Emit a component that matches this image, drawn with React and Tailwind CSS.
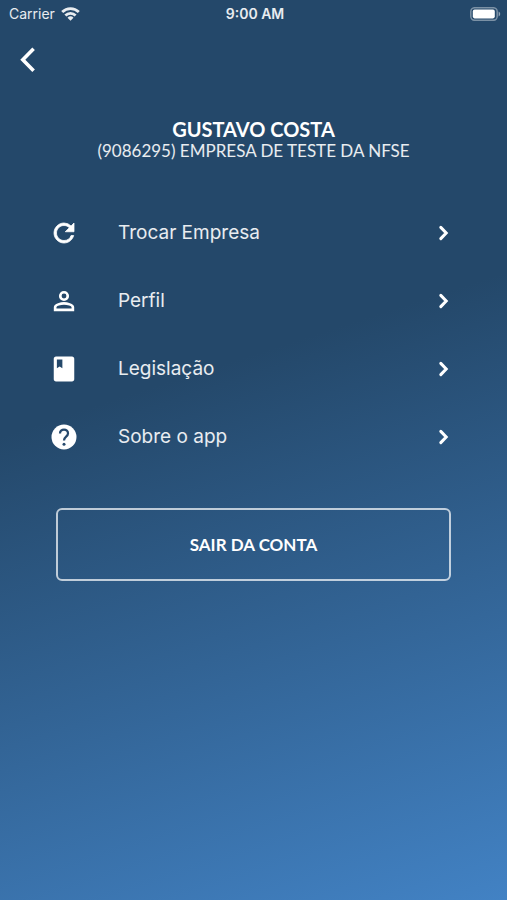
import React from 'react';

const WifiIcon = () => (
  <svg width="19" height="14" viewBox="0 0 19 14" fill="none" stroke="currentColor" strokeWidth="2.8">
    <path d="M1.2 5a11.8 11.8 0 0 1 16.6 0" />
    <path d="M4.4 8.5a7.2 7.2 0 0 1 10.2 0" />
    <path d="M9.5 13.8 6.5 10.8a4.3 4.3 0 0 1 6 0z" fill="currentColor" stroke="none" />
  </svg>
);

const BatteryIcon = () => (
  <svg width="31" height="14" viewBox="0 0 31 14" fill="none">
    <rect x="0.8" y="0.7" width="26.4" height="12.6" rx="4" stroke="white" strokeOpacity="0.4" strokeWidth="1.5" />
    <rect x="2.8" y="2.6" width="22" height="8.8" rx="1.8" fill="white" />
    <path d="M28.6 4.6c1 .4 1.6 1.3 1.6 2.4s-.6 2-1.6 2.4z" fill="white" fillOpacity="0.5" />
  </svg>
);

const RefreshIcon = () => (
  <svg width="30" height="30" viewBox="0 0 24 24" fill="currentColor" stroke="currentColor" strokeWidth="0.6">
    <path d="M17.65 6.35A7.958 7.958 0 0 0 12 4c-4.42 0-7.99 3.58-7.99 8s3.57 8 7.99 8c3.73 0 6.84-2.55 7.73-6h-2.08A5.99 5.99 0 0 1 12 18c-3.31 0-6-2.69-6-6s2.69-6 6-6c1.66 0 3.14.69 4.22 1.78L13 11h7V4l-2.35 2.35z" />
  </svg>
);

const PersonIcon = () => (
  <svg width="30" height="30" viewBox="0 0 24 24" fill="none" stroke="currentColor" strokeWidth="2.1">
    <circle cx="12" cy="8" r="3" />
    <path d="M4.9 19.1V17c0-2 4.7-3.1 7.1-3.1s7.1 1.1 7.1 3.1v2.1z" />
  </svg>
);

const BookIcon = () => (
  <svg width="30" height="30" viewBox="0 0 24 24" fill="currentColor" fillRule="evenodd">
    <path d="M5.6 2h12.8c1 0 1.8.8 1.8 1.8v16.4c0 1-.8 1.8-1.8 1.8H5.6c-1 0-1.8-.8-1.8-1.8V3.8c0-1 .8-1.8 1.8-1.8zM6.3 4.4v7l2.2-1.4 2.2 1.4v-7z" />
  </svg>
);

const HelpIcon = () => (
  <svg width="30" height="30" viewBox="0 0 24 24" fill="none">
    <circle cx="12" cy="12" r="10" fill="currentColor" />
    <path d="M8.8 9.1c0-1.8 1.4-3.1 3.2-3.1s3.2 1.3 3.2 3.1c0 2.5-3.2 2.7-3.2 5.6" stroke="#26496d" strokeWidth="1.8" />
    <circle cx="12" cy="17.7" r="1.2" fill="#26496d" />
  </svg>
);

const menuItems = [
  { label: 'Trocar Empresa', icon: RefreshIcon },
  { label: 'Perfil', icon: PersonIcon },
  { label: 'Legislação', icon: BookIcon },
  { label: 'Sobre o app', icon: HelpIcon },
];

const StatusBar = () => (
  <div className="grid h-7 grid-cols-3 items-center pl-[9px] pr-[6px] text-sm text-white/90">
    <div className="flex items-center gap-[6px]">
      <span>Carrier</span>
      <WifiIcon />
    </div>
    <span className="text-center font-semibold">9:00 AM</span>
    <div className="flex justify-end">
      <BatteryIcon />
    </div>
  </div>
);

const MenuItem = ({ label, icon: Icon }) => (
  <li>
    <button type="button" className="flex h-[68px] w-full items-center pl-[49px] pr-[57px] text-left">
      <Icon />
      <span className="ml-[39px] flex-1 text-[19px] text-white/90">{label}</span>
      <svg width="12" height="16" viewBox="0 0 12 16" fill="none" stroke="currentColor" strokeWidth="3" strokeLinecap="round">
        <path d="M2.8 2.4 8.2 8l-5.4 5.6" />
      </svg>
    </button>
  </li>
);

export default function App() {
  return (
    <div className="min-h-screen bg-[linear-gradient(162deg,#24486a_0%,#24486a_41%,#4282c4_100%)] font-['Inter',sans-serif] text-white">
      <StatusBar />

      <header className="px-4 pt-4">
        <button type="button" aria-label="Voltar" className="block">
          <svg width="24" height="32" viewBox="0 0 24 32" fill="none" stroke="currentColor" strokeWidth="3.6">
            <path d="M17.6 4.8 6.8 15.8l10.8 11" />
          </svg>
        </button>
      </header>

      <main>
        <div className="mt-[42px] text-center font-['Lato',sans-serif]">
          <h1 className="text-xl leading-[22px] font-bold">GUSTAVO COSTA</h1>
          <p className="text-[17px] leading-[22px] text-white/90">(9086295) EMPRESA DE TESTE DA NFSE</p>
        </div>

        <ul className="mt-[37px]">
          {menuItems.map((item) => (
            <MenuItem key={item.label} {...item} />
          ))}
        </ul>

        <div className="mt-[37px] px-14">
          <button
            type="button"
            className="h-[73px] w-full rounded-md border-2 border-white/70 font-['Lato',sans-serif] text-[17px] font-bold"
          >
            SAIR DA CONTA
          </button>
        </div>
      </main>
    </div>
  );
}
